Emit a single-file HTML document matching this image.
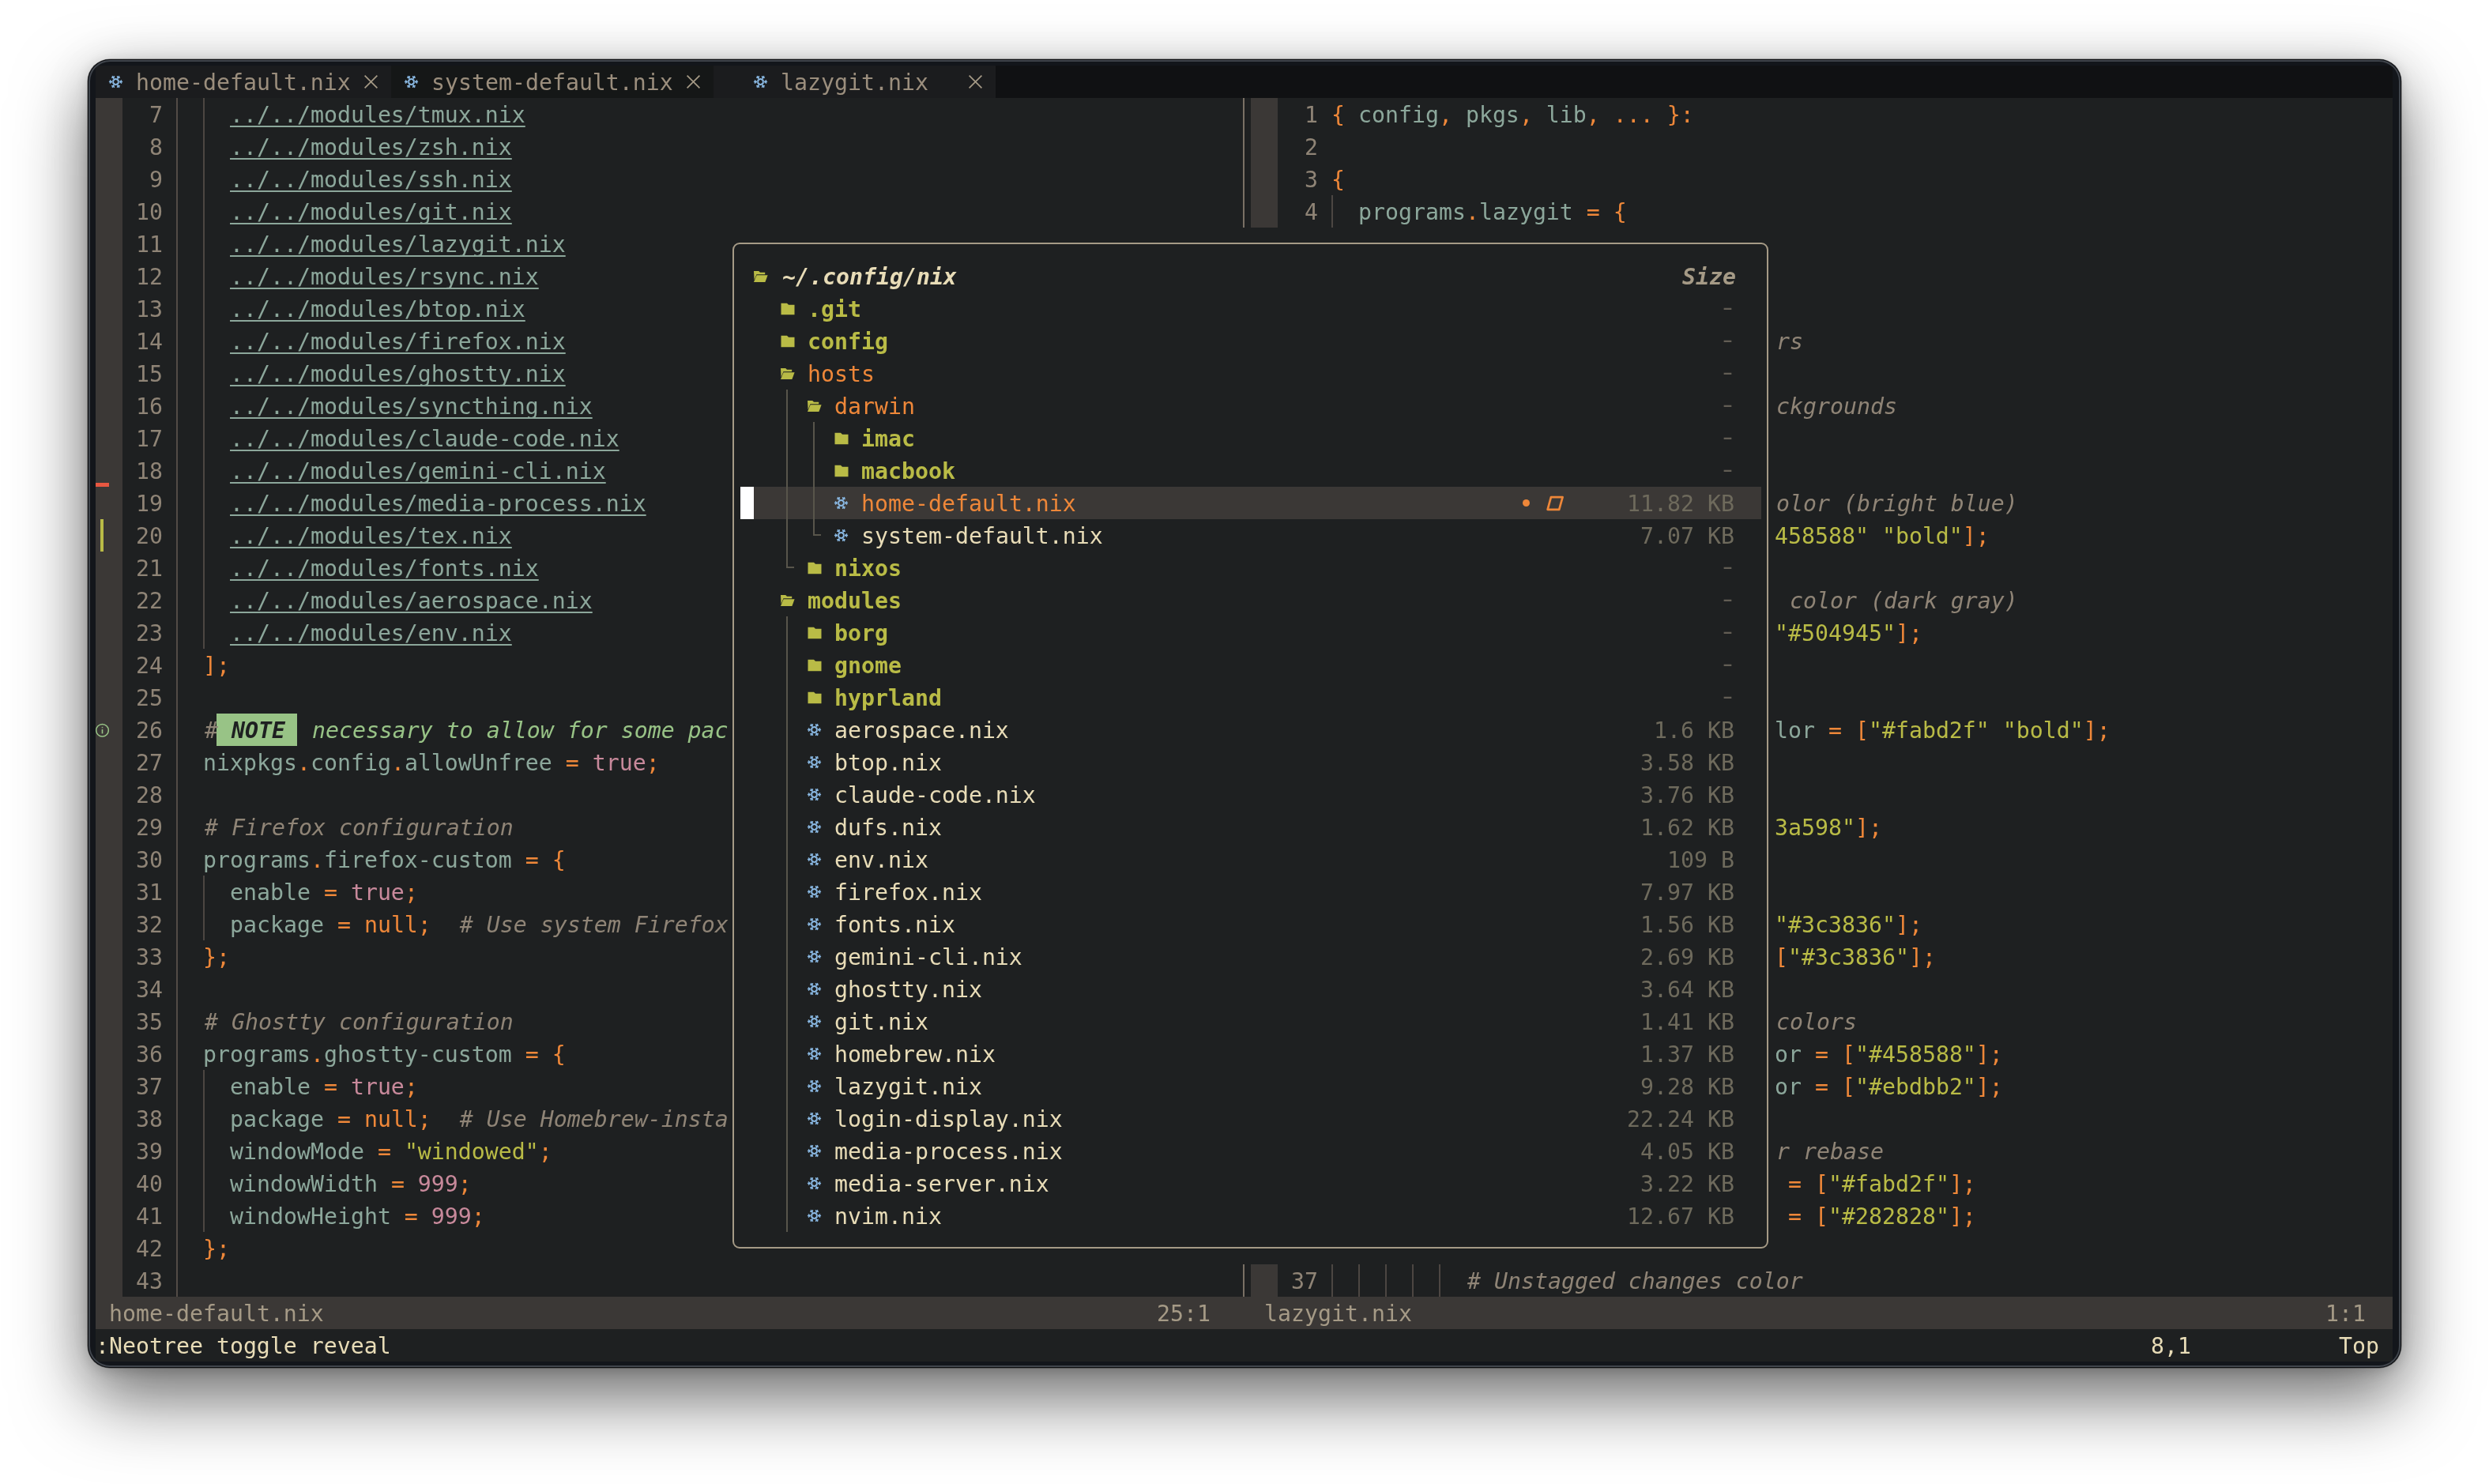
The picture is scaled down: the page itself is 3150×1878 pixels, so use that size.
<!DOCTYPE html>
<html lang="en"><head><meta charset="utf-8"><title>nvim — home-default.nix</title>
<style>
html,body{margin:0;padding:0}
body{width:3150px;height:1878px;background:#fff;position:relative;overflow:hidden}
#win{position:absolute;left:111px;top:75px;width:2928px;height:1656px;border-radius:28px;background:#13161b;
 box-shadow:0 0 0 .5px rgba(0,0,0,.5),0 40px 92px rgba(0,0,0,.54),0 8px 62px rgba(0,0,0,.10),0 3px 16px rgba(0,0,0,.15);overflow:hidden}
#edge{position:absolute;left:0;top:0;right:0;bottom:0;border-radius:28px;box-shadow:inset 0 0 0 1px #0b0c0f,inset 0 0 0 3px #40454c;pointer-events:none}
#grid{position:absolute;left:10px;top:8px;width:2907px;height:1640px;background:#1e2021;overflow:hidden;
 font-family:"DejaVu Sans Mono","Liberation Mono",monospace;font-size:28.237px;line-height:41px;color:#e8dcb7}
#txt{position:absolute;left:0;top:0;width:2907px;height:1640px;will-change:transform}
.b{position:absolute;display:block}
.t{position:absolute;white-space:pre;height:41px;padding-top:1px;box-sizing:border-box;font-kerning:none;font-variant-ligatures:none}
.i{font-style:italic;position:relative;left:2px}
.num{color:#8f8476} .com{color:#8f8476} .id{color:#8ca79b} .op{color:#ee8739}
.str{color:#b9bb46} .bool{color:#c8899b} .fg{color:#e8dcb7} .st{color:#a59a86}
.grn{color:#98c386} .tab{color:#9b8e7d}
.path{color:#8ca79b;text-decoration:underline;text-decoration-thickness:2px;text-underline-offset:4px;text-decoration-skip-ink:none}
.note{color:#1e2021;font-weight:bold}
.dir{color:#b9bb46;font-weight:bold} .mod{color:#ee8739} .file{color:#e8dcb7}
.root{color:#e8dcb7;font-weight:bold;font-style:italic;position:relative;left:2px} .sizeh{color:#a59a86;font-weight:bold;font-style:italic;position:relative;left:2px}
.size{color:#6e6a5c} .dash{color:#625d54;position:relative;top:-2px;display:inline-block;transform:scaleX(1.35)}
</style></head>
<body><div id="win"><div id="grid">
<div class="b" style="left:0px;top:0px;width:2907px;height:41px;background:#101113;"></div>
<div class="b" style="left:0px;top:0px;width:374px;height:41px;background:#1b1c1e;"></div>
<div class="b" style="left:374px;top:0px;width:408px;height:41px;background:#151717;"></div>
<div class="b" style="left:782px;top:0px;width:357px;height:41px;background:#1b1c1e;"></div>
<div class="b" style="left:0px;top:41px;width:34px;height:1517px;background:#3b3836;"></div>
<div class="b" style="left:153px;top:820px;width:102px;height:41px;background:#98c386;"></div>
<div class="b" style="left:102px;top:41px;width:2px;height:1517px;background:#524b46;"></div>
<div class="b" style="left:136px;top:41px;width:2px;height:697px;background:#4c4642;"></div>
<div class="b" style="left:136px;top:1025px;width:2px;height:82px;background:#4c4642;"></div>
<div class="b" style="left:136px;top:1271px;width:2px;height:205px;background:#4c4642;"></div>
<div class="b" style="left:0px;top:528px;width:17px;height:5px;background:#e85741;"></div>
<div class="b" style="left:6px;top:574px;width:4px;height:41px;background:#b9bb46;"></div>
<div class="b" style="left:1452px;top:41px;width:2px;height:164px;background:#797065;"></div>
<div class="b" style="left:1452px;top:1517px;width:2px;height:41px;background:#797065;"></div>
<div class="b" style="left:1462px;top:41px;width:34px;height:164px;background:#3b3836;"></div>
<div class="b" style="left:1462px;top:1517px;width:34px;height:41px;background:#3b3836;"></div>
<div class="b" style="left:1564px;top:164px;width:2px;height:41px;background:#4c4642;"></div>
<div class="b" style="left:1564px;top:1517px;width:2px;height:41px;background:#4c4642;"></div>
<div class="b" style="left:1598px;top:1517px;width:2px;height:41px;background:#4c4642;"></div>
<div class="b" style="left:1632px;top:1517px;width:2px;height:41px;background:#4c4642;"></div>
<div class="b" style="left:1666px;top:1517px;width:2px;height:41px;background:#4c4642;"></div>
<div class="b" style="left:1700px;top:1517px;width:2px;height:41px;background:#4c4642;"></div>
<div class="b" style="box-sizing:border-box;left:806px;top:224px;width:1311px;height:1273px;border:2px solid #a59a86;border-radius:9px;"></div>
<div class="b" style="left:816px;top:533px;width:1292px;height:41px;background:#3b3836;"></div>
<div class="b" style="left:816px;top:533px;width:17px;height:41px;background:#ffffff;"></div>
<div class="b" style="left:1806px;top:549px;width:9px;height:9px;background:#ee8739;border-radius:50%"></div>
<div class="b" style="left:874px;top:410px;width:2px;height:226px;background:#58554b;"></div>
<div class="b" style="left:874px;top:634px;width:10px;height:2px;background:#58554b;"></div>
<div class="b" style="left:908px;top:451px;width:2px;height:144px;background:#58554b;"></div>
<div class="b" style="left:908px;top:593px;width:10px;height:2px;background:#58554b;"></div>
<div class="b" style="left:874px;top:697px;width:2px;height:779px;background:#58554b;"></div>
<div class="b" style="left:0px;top:1558px;width:2907px;height:41px;background:#3b3836;"></div>
<div id="txt">
<svg class="b" style="left:16px;top:0px" width="19" height="41" viewBox="-1 0 19 41"><g stroke="#8cbbe6" fill="none"><polygon points="11.70,22.35 8.50,24.20 5.30,22.35 5.30,18.65 8.50,16.80 11.70,18.65" stroke-width="1.9"/><line x1="12.80" y1="20.50" x2="17.10" y2="20.50" stroke-width="1.6"/><line x1="14.10" y1="20.50" x2="15.84" y2="18.43" stroke-width="1.35"/><line x1="14.10" y1="20.50" x2="15.84" y2="22.57" stroke-width="1.35"/><line x1="10.65" y1="24.22" x2="12.80" y2="27.95" stroke-width="1.6"/><line x1="11.30" y1="25.35" x2="13.96" y2="25.82" stroke-width="1.35"/><line x1="11.30" y1="25.35" x2="10.38" y2="27.89" stroke-width="1.35"/><line x1="6.35" y1="24.22" x2="4.20" y2="27.95" stroke-width="1.6"/><line x1="5.70" y1="25.35" x2="6.62" y2="27.89" stroke-width="1.35"/><line x1="5.70" y1="25.35" x2="3.04" y2="25.82" stroke-width="1.35"/><line x1="4.20" y1="20.50" x2="-0.10" y2="20.50" stroke-width="1.6"/><line x1="2.90" y1="20.50" x2="1.16" y2="22.57" stroke-width="1.35"/><line x1="2.90" y1="20.50" x2="1.16" y2="18.43" stroke-width="1.35"/><line x1="6.35" y1="16.78" x2="4.20" y2="13.05" stroke-width="1.6"/><line x1="5.70" y1="15.65" x2="3.04" y2="15.18" stroke-width="1.35"/><line x1="5.70" y1="15.65" x2="6.62" y2="13.11" stroke-width="1.35"/><line x1="10.65" y1="16.78" x2="12.80" y2="13.05" stroke-width="1.6"/><line x1="11.30" y1="15.65" x2="10.38" y2="13.11" stroke-width="1.35"/><line x1="11.30" y1="15.65" x2="13.96" y2="15.18" stroke-width="1.35"/></g></svg>
<div class="t " style="left:51px;top:0px"><span class="tab">home-default.nix</span></div>
<svg class="b" style="left:340px;top:0px" width="17" height="41" viewBox="0 0 17 41"><path d="M0.6 12.6 L16.4 28.4 M16.4 12.6 L0.6 28.4" stroke="#a59a86" stroke-width="1.7" fill="none"/></svg>
<svg class="b" style="left:390px;top:0px" width="19" height="41" viewBox="-1 0 19 41"><g stroke="#8cbbe6" fill="none"><polygon points="11.70,22.35 8.50,24.20 5.30,22.35 5.30,18.65 8.50,16.80 11.70,18.65" stroke-width="1.9"/><line x1="12.80" y1="20.50" x2="17.10" y2="20.50" stroke-width="1.6"/><line x1="14.10" y1="20.50" x2="15.84" y2="18.43" stroke-width="1.35"/><line x1="14.10" y1="20.50" x2="15.84" y2="22.57" stroke-width="1.35"/><line x1="10.65" y1="24.22" x2="12.80" y2="27.95" stroke-width="1.6"/><line x1="11.30" y1="25.35" x2="13.96" y2="25.82" stroke-width="1.35"/><line x1="11.30" y1="25.35" x2="10.38" y2="27.89" stroke-width="1.35"/><line x1="6.35" y1="24.22" x2="4.20" y2="27.95" stroke-width="1.6"/><line x1="5.70" y1="25.35" x2="6.62" y2="27.89" stroke-width="1.35"/><line x1="5.70" y1="25.35" x2="3.04" y2="25.82" stroke-width="1.35"/><line x1="4.20" y1="20.50" x2="-0.10" y2="20.50" stroke-width="1.6"/><line x1="2.90" y1="20.50" x2="1.16" y2="22.57" stroke-width="1.35"/><line x1="2.90" y1="20.50" x2="1.16" y2="18.43" stroke-width="1.35"/><line x1="6.35" y1="16.78" x2="4.20" y2="13.05" stroke-width="1.6"/><line x1="5.70" y1="15.65" x2="3.04" y2="15.18" stroke-width="1.35"/><line x1="5.70" y1="15.65" x2="6.62" y2="13.11" stroke-width="1.35"/><line x1="10.65" y1="16.78" x2="12.80" y2="13.05" stroke-width="1.6"/><line x1="11.30" y1="15.65" x2="10.38" y2="13.11" stroke-width="1.35"/><line x1="11.30" y1="15.65" x2="13.96" y2="15.18" stroke-width="1.35"/></g></svg>
<div class="t " style="left:425px;top:0px"><span class="tab">system-default.nix</span></div>
<svg class="b" style="left:748px;top:0px" width="17" height="41" viewBox="0 0 17 41"><path d="M0.6 12.6 L16.4 28.4 M16.4 12.6 L0.6 28.4" stroke="#a59a86" stroke-width="1.7" fill="none"/></svg>
<svg class="b" style="left:832px;top:0px" width="19" height="41" viewBox="-1 0 19 41"><g stroke="#8cbbe6" fill="none"><polygon points="11.70,22.35 8.50,24.20 5.30,22.35 5.30,18.65 8.50,16.80 11.70,18.65" stroke-width="1.9"/><line x1="12.80" y1="20.50" x2="17.10" y2="20.50" stroke-width="1.6"/><line x1="14.10" y1="20.50" x2="15.84" y2="18.43" stroke-width="1.35"/><line x1="14.10" y1="20.50" x2="15.84" y2="22.57" stroke-width="1.35"/><line x1="10.65" y1="24.22" x2="12.80" y2="27.95" stroke-width="1.6"/><line x1="11.30" y1="25.35" x2="13.96" y2="25.82" stroke-width="1.35"/><line x1="11.30" y1="25.35" x2="10.38" y2="27.89" stroke-width="1.35"/><line x1="6.35" y1="24.22" x2="4.20" y2="27.95" stroke-width="1.6"/><line x1="5.70" y1="25.35" x2="6.62" y2="27.89" stroke-width="1.35"/><line x1="5.70" y1="25.35" x2="3.04" y2="25.82" stroke-width="1.35"/><line x1="4.20" y1="20.50" x2="-0.10" y2="20.50" stroke-width="1.6"/><line x1="2.90" y1="20.50" x2="1.16" y2="22.57" stroke-width="1.35"/><line x1="2.90" y1="20.50" x2="1.16" y2="18.43" stroke-width="1.35"/><line x1="6.35" y1="16.78" x2="4.20" y2="13.05" stroke-width="1.6"/><line x1="5.70" y1="15.65" x2="3.04" y2="15.18" stroke-width="1.35"/><line x1="5.70" y1="15.65" x2="6.62" y2="13.11" stroke-width="1.35"/><line x1="10.65" y1="16.78" x2="12.80" y2="13.05" stroke-width="1.6"/><line x1="11.30" y1="15.65" x2="10.38" y2="13.11" stroke-width="1.35"/><line x1="11.30" y1="15.65" x2="13.96" y2="15.18" stroke-width="1.35"/></g></svg>
<div class="t " style="left:867px;top:0px"><span class="tab">lazygit.nix</span></div>
<svg class="b" style="left:1105px;top:0px" width="17" height="41" viewBox="0 0 17 41"><path d="M0.6 12.6 L16.4 28.4 M16.4 12.6 L0.6 28.4" stroke="#a59a86" stroke-width="1.7" fill="none"/></svg>
<div class="t " style="left:34px;top:41px"><span class="num">  7</span></div>
<div class="t " style="left:170px;top:41px"><span class="path">../../modules/tmux.nix</span></div>
<div class="t " style="left:34px;top:82px"><span class="num">  8</span></div>
<div class="t " style="left:170px;top:82px"><span class="path">../../modules/zsh.nix</span></div>
<div class="t " style="left:34px;top:123px"><span class="num">  9</span></div>
<div class="t " style="left:170px;top:123px"><span class="path">../../modules/ssh.nix</span></div>
<div class="t " style="left:34px;top:164px"><span class="num"> 10</span></div>
<div class="t " style="left:170px;top:164px"><span class="path">../../modules/git.nix</span></div>
<div class="t " style="left:34px;top:205px"><span class="num"> 11</span></div>
<div class="t " style="left:170px;top:205px"><span class="path">../../modules/lazygit.nix</span></div>
<div class="t " style="left:34px;top:246px"><span class="num"> 12</span></div>
<div class="t " style="left:170px;top:246px"><span class="path">../../modules/rsync.nix</span></div>
<div class="t " style="left:34px;top:287px"><span class="num"> 13</span></div>
<div class="t " style="left:170px;top:287px"><span class="path">../../modules/btop.nix</span></div>
<div class="t " style="left:34px;top:328px"><span class="num"> 14</span></div>
<div class="t " style="left:170px;top:328px"><span class="path">../../modules/firefox.nix</span></div>
<div class="t " style="left:34px;top:369px"><span class="num"> 15</span></div>
<div class="t " style="left:170px;top:369px"><span class="path">../../modules/ghostty.nix</span></div>
<div class="t " style="left:34px;top:410px"><span class="num"> 16</span></div>
<div class="t " style="left:170px;top:410px"><span class="path">../../modules/syncthing.nix</span></div>
<div class="t " style="left:34px;top:451px"><span class="num"> 17</span></div>
<div class="t " style="left:170px;top:451px"><span class="path">../../modules/claude-code.nix</span></div>
<div class="t " style="left:34px;top:492px"><span class="num"> 18</span></div>
<div class="t " style="left:170px;top:492px"><span class="path">../../modules/gemini-cli.nix</span></div>
<div class="t " style="left:34px;top:533px"><span class="num"> 19</span></div>
<div class="t " style="left:170px;top:533px"><span class="path">../../modules/media-process.nix</span></div>
<div class="t " style="left:34px;top:574px"><span class="num"> 20</span></div>
<div class="t " style="left:170px;top:574px"><span class="path">../../modules/tex.nix</span></div>
<div class="t " style="left:34px;top:615px"><span class="num"> 21</span></div>
<div class="t " style="left:170px;top:615px"><span class="path">../../modules/fonts.nix</span></div>
<div class="t " style="left:34px;top:656px"><span class="num"> 22</span></div>
<div class="t " style="left:170px;top:656px"><span class="path">../../modules/aerospace.nix</span></div>
<div class="t " style="left:34px;top:697px"><span class="num"> 23</span></div>
<div class="t " style="left:170px;top:697px"><span class="path">../../modules/env.nix</span></div>
<div class="t " style="left:34px;top:738px"><span class="num"> 24</span></div>
<div class="t " style="left:136px;top:738px"><span class="op">];</span></div>
<div class="t " style="left:34px;top:779px"><span class="num"> 25</span></div>
<div class="t " style="left:34px;top:820px"><span class="num"> 26</span></div>
<div class="t " style="left:136px;top:820px"><span class="com i">#</span><span class="note i"> NOTE </span><span class="grn i"> necessary to allow for some pac</span></div>
<div class="t " style="left:34px;top:861px"><span class="num"> 27</span></div>
<div class="t " style="left:136px;top:861px"><span class="id">nixpkgs</span><span class="op">.</span><span class="id">config</span><span class="op">.</span><span class="id">allowUnfree</span><span class="op"> = </span><span class="bool">true</span><span class="op">;</span></div>
<div class="t " style="left:34px;top:902px"><span class="num"> 28</span></div>
<div class="t " style="left:34px;top:943px"><span class="num"> 29</span></div>
<div class="t " style="left:136px;top:943px"><span class="com i"># Firefox configuration</span></div>
<div class="t " style="left:34px;top:984px"><span class="num"> 30</span></div>
<div class="t " style="left:136px;top:984px"><span class="id">programs</span><span class="op">.</span><span class="id">firefox-custom</span><span class="op"> = {</span></div>
<div class="t " style="left:34px;top:1025px"><span class="num"> 31</span></div>
<div class="t " style="left:170px;top:1025px"><span class="id">enable</span><span class="op"> = </span><span class="bool">true</span><span class="op">;</span></div>
<div class="t " style="left:34px;top:1066px"><span class="num"> 32</span></div>
<div class="t " style="left:170px;top:1066px"><span class="id">package</span><span class="op"> = null;</span><span class="com i">  # Use system Firefox</span></div>
<div class="t " style="left:34px;top:1107px"><span class="num"> 33</span></div>
<div class="t " style="left:136px;top:1107px"><span class="op">};</span></div>
<div class="t " style="left:34px;top:1148px"><span class="num"> 34</span></div>
<div class="t " style="left:34px;top:1189px"><span class="num"> 35</span></div>
<div class="t " style="left:136px;top:1189px"><span class="com i"># Ghostty configuration</span></div>
<div class="t " style="left:34px;top:1230px"><span class="num"> 36</span></div>
<div class="t " style="left:136px;top:1230px"><span class="id">programs</span><span class="op">.</span><span class="id">ghostty-custom</span><span class="op"> = {</span></div>
<div class="t " style="left:34px;top:1271px"><span class="num"> 37</span></div>
<div class="t " style="left:170px;top:1271px"><span class="id">enable</span><span class="op"> = </span><span class="bool">true</span><span class="op">;</span></div>
<div class="t " style="left:34px;top:1312px"><span class="num"> 38</span></div>
<div class="t " style="left:170px;top:1312px"><span class="id">package</span><span class="op"> = null;</span><span class="com i">  # Use Homebrew-insta</span></div>
<div class="t " style="left:34px;top:1353px"><span class="num"> 39</span></div>
<div class="t " style="left:170px;top:1353px"><span class="id">windowMode</span><span class="op"> = </span><span class="str">"windowed"</span><span class="op">;</span></div>
<div class="t " style="left:34px;top:1394px"><span class="num"> 40</span></div>
<div class="t " style="left:170px;top:1394px"><span class="id">windowWidth</span><span class="op"> = </span><span class="bool">999</span><span class="op">;</span></div>
<div class="t " style="left:34px;top:1435px"><span class="num"> 41</span></div>
<div class="t " style="left:170px;top:1435px"><span class="id">windowHeight</span><span class="op"> = </span><span class="bool">999</span><span class="op">;</span></div>
<div class="t " style="left:34px;top:1476px"><span class="num"> 42</span></div>
<div class="t " style="left:136px;top:1476px"><span class="op">};</span></div>
<div class="t " style="left:34px;top:1517px"><span class="num"> 43</span></div>
<svg class="b" style="left:0px;top:820px" width="17" height="41" viewBox="0 0 17 41"><circle cx="8.5" cy="21.2" r="7.8" fill="none" stroke="#98c386" stroke-width="1.5"/><rect x="7.7" y="20" width="1.6" height="5.4" fill="#98c386"/><rect x="7.7" y="16.8" width="1.6" height="1.6" fill="#98c386" opacity=".8"/></svg>
<div class="t " style="left:1496px;top:41px"><span class="num">  1</span></div>
<div class="t " style="left:1496px;top:82px"><span class="num">  2</span></div>
<div class="t " style="left:1496px;top:123px"><span class="num">  3</span></div>
<div class="t " style="left:1496px;top:164px"><span class="num">  4</span></div>
<div class="t " style="left:1564px;top:41px"><span class="op">{ </span><span class="id">config</span><span class="op">, </span><span class="id">pkgs</span><span class="op">, </span><span class="id">lib</span><span class="op">, ... }:</span></div>
<div class="t " style="left:1564px;top:123px"><span class="op">{</span></div>
<div class="t " style="left:1598px;top:164px"><span class="id">programs</span><span class="op">.</span><span class="id">lazygit</span><span class="op"> = {</span></div>
<div class="t " style="left:1496px;top:1517px"><span class="num"> 37</span></div>
<div class="t " style="left:1734px;top:1517px"><span class="com i"># Unstagged changes color</span></div>
<div class="t " style="left:2125px;top:328px"><span class="com i">rs</span></div>
<div class="t " style="left:2125px;top:410px"><span class="com i">ckgrounds</span></div>
<div class="t " style="left:2125px;top:533px"><span class="com i">olor (bright blue)</span></div>
<div class="t " style="left:2125px;top:574px"><span class="str">458588" "bold"</span><span class="op">];</span></div>
<div class="t " style="left:2125px;top:656px"><span class="com i"> color (dark gray)</span></div>
<div class="t " style="left:2125px;top:697px"><span class="str">"#504945"</span><span class="op">];</span></div>
<div class="t " style="left:2125px;top:820px"><span class="id">lor</span><span class="op"> = [</span><span class="str">"#fabd2f" "bold"</span><span class="op">];</span></div>
<div class="t " style="left:2125px;top:943px"><span class="str">3a598"</span><span class="op">];</span></div>
<div class="t " style="left:2125px;top:1066px"><span class="str">"#3c3836"</span><span class="op">];</span></div>
<div class="t " style="left:2125px;top:1107px"><span class="op">[</span><span class="str">"#3c3836"</span><span class="op">];</span></div>
<div class="t " style="left:2125px;top:1189px"><span class="com i">colors</span></div>
<div class="t " style="left:2125px;top:1230px"><span class="id">or</span><span class="op"> = [</span><span class="str">"#458588"</span><span class="op">];</span></div>
<div class="t " style="left:2125px;top:1271px"><span class="id">or</span><span class="op"> = [</span><span class="str">"#ebdbb2"</span><span class="op">];</span></div>
<div class="t " style="left:2125px;top:1353px"><span class="com i">r rebase</span></div>
<div class="t " style="left:2125px;top:1394px"><span class="op"> = [</span><span class="str">"#fabd2f"</span><span class="op">];</span></div>
<div class="t " style="left:2125px;top:1435px"><span class="op"> = [</span><span class="str">"#282828"</span><span class="op">];</span></div>
<svg class="b" style="left:833px;top:246px" width="18" height="41" viewBox="0 0 18 41"><path d="M0 14 H6.2 L8 15.8 H14.2 V18.2 H3.4 L0.6 25.5 Z" fill="#b9bb46"/><path d="M3.6 19.2 H17.6 L14.4 28 H0 Z" fill="#b9bb46"/></svg>
<div class="t " style="left:867px;top:246px"><span class="root">~/.config/nix</span></div>
<div class="t " style="left:2006px;top:246px"><span class="sizeh">Size</span></div>
<svg class="b" style="left:867px;top:287px" width="18" height="41" viewBox="0 0 18 41"><path d="M0.5 13.7 H8 L10 15.8 H17.5 V28.2 H0.5 Z" fill="#b9bb46"/></svg>
<div class="t " style="left:901px;top:287px"><span class="dir">.git</span></div>
<div class="t " style="left:2057px;top:287px"><span class="dash">-</span></div>
<svg class="b" style="left:867px;top:328px" width="18" height="41" viewBox="0 0 18 41"><path d="M0.5 13.7 H8 L10 15.8 H17.5 V28.2 H0.5 Z" fill="#b9bb46"/></svg>
<div class="t " style="left:901px;top:328px"><span class="dir">config</span></div>
<div class="t " style="left:2057px;top:328px"><span class="dash">-</span></div>
<svg class="b" style="left:867px;top:369px" width="18" height="41" viewBox="0 0 18 41"><path d="M0 14 H6.2 L8 15.8 H14.2 V18.2 H3.4 L0.6 25.5 Z" fill="#b9bb46"/><path d="M3.6 19.2 H17.6 L14.4 28 H0 Z" fill="#b9bb46"/></svg>
<div class="t " style="left:901px;top:369px"><span class="mod">hosts</span></div>
<div class="t " style="left:2057px;top:369px"><span class="dash">-</span></div>
<svg class="b" style="left:901px;top:410px" width="18" height="41" viewBox="0 0 18 41"><path d="M0 14 H6.2 L8 15.8 H14.2 V18.2 H3.4 L0.6 25.5 Z" fill="#b9bb46"/><path d="M3.6 19.2 H17.6 L14.4 28 H0 Z" fill="#b9bb46"/></svg>
<div class="t " style="left:935px;top:410px"><span class="mod">darwin</span></div>
<div class="t " style="left:2057px;top:410px"><span class="dash">-</span></div>
<svg class="b" style="left:935px;top:451px" width="18" height="41" viewBox="0 0 18 41"><path d="M0.5 13.7 H8 L10 15.8 H17.5 V28.2 H0.5 Z" fill="#b9bb46"/></svg>
<div class="t " style="left:969px;top:451px"><span class="dir">imac</span></div>
<div class="t " style="left:2057px;top:451px"><span class="dash">-</span></div>
<svg class="b" style="left:935px;top:492px" width="18" height="41" viewBox="0 0 18 41"><path d="M0.5 13.7 H8 L10 15.8 H17.5 V28.2 H0.5 Z" fill="#b9bb46"/></svg>
<div class="t " style="left:969px;top:492px"><span class="dir">macbook</span></div>
<div class="t " style="left:2057px;top:492px"><span class="dash">-</span></div>
<svg class="b" style="left:934px;top:533px" width="19" height="41" viewBox="-1 0 19 41"><g stroke="#8cbbe6" fill="none"><polygon points="11.70,22.35 8.50,24.20 5.30,22.35 5.30,18.65 8.50,16.80 11.70,18.65" stroke-width="1.9"/><line x1="12.80" y1="20.50" x2="17.10" y2="20.50" stroke-width="1.6"/><line x1="14.10" y1="20.50" x2="15.84" y2="18.43" stroke-width="1.35"/><line x1="14.10" y1="20.50" x2="15.84" y2="22.57" stroke-width="1.35"/><line x1="10.65" y1="24.22" x2="12.80" y2="27.95" stroke-width="1.6"/><line x1="11.30" y1="25.35" x2="13.96" y2="25.82" stroke-width="1.35"/><line x1="11.30" y1="25.35" x2="10.38" y2="27.89" stroke-width="1.35"/><line x1="6.35" y1="24.22" x2="4.20" y2="27.95" stroke-width="1.6"/><line x1="5.70" y1="25.35" x2="6.62" y2="27.89" stroke-width="1.35"/><line x1="5.70" y1="25.35" x2="3.04" y2="25.82" stroke-width="1.35"/><line x1="4.20" y1="20.50" x2="-0.10" y2="20.50" stroke-width="1.6"/><line x1="2.90" y1="20.50" x2="1.16" y2="22.57" stroke-width="1.35"/><line x1="2.90" y1="20.50" x2="1.16" y2="18.43" stroke-width="1.35"/><line x1="6.35" y1="16.78" x2="4.20" y2="13.05" stroke-width="1.6"/><line x1="5.70" y1="15.65" x2="3.04" y2="15.18" stroke-width="1.35"/><line x1="5.70" y1="15.65" x2="6.62" y2="13.11" stroke-width="1.35"/><line x1="10.65" y1="16.78" x2="12.80" y2="13.05" stroke-width="1.6"/><line x1="11.30" y1="15.65" x2="10.38" y2="13.11" stroke-width="1.35"/><line x1="11.30" y1="15.65" x2="13.96" y2="15.18" stroke-width="1.35"/></g></svg>
<div class="t " style="left:969px;top:533px"><span class="mod">home-default.nix</span></div>
<div class="t " style="left:1938px;top:533px"><span class="size">11.82 KB</span></div>
<svg class="b" style="left:934px;top:574px" width="19" height="41" viewBox="-1 0 19 41"><g stroke="#8cbbe6" fill="none"><polygon points="11.70,22.35 8.50,24.20 5.30,22.35 5.30,18.65 8.50,16.80 11.70,18.65" stroke-width="1.9"/><line x1="12.80" y1="20.50" x2="17.10" y2="20.50" stroke-width="1.6"/><line x1="14.10" y1="20.50" x2="15.84" y2="18.43" stroke-width="1.35"/><line x1="14.10" y1="20.50" x2="15.84" y2="22.57" stroke-width="1.35"/><line x1="10.65" y1="24.22" x2="12.80" y2="27.95" stroke-width="1.6"/><line x1="11.30" y1="25.35" x2="13.96" y2="25.82" stroke-width="1.35"/><line x1="11.30" y1="25.35" x2="10.38" y2="27.89" stroke-width="1.35"/><line x1="6.35" y1="24.22" x2="4.20" y2="27.95" stroke-width="1.6"/><line x1="5.70" y1="25.35" x2="6.62" y2="27.89" stroke-width="1.35"/><line x1="5.70" y1="25.35" x2="3.04" y2="25.82" stroke-width="1.35"/><line x1="4.20" y1="20.50" x2="-0.10" y2="20.50" stroke-width="1.6"/><line x1="2.90" y1="20.50" x2="1.16" y2="22.57" stroke-width="1.35"/><line x1="2.90" y1="20.50" x2="1.16" y2="18.43" stroke-width="1.35"/><line x1="6.35" y1="16.78" x2="4.20" y2="13.05" stroke-width="1.6"/><line x1="5.70" y1="15.65" x2="3.04" y2="15.18" stroke-width="1.35"/><line x1="5.70" y1="15.65" x2="6.62" y2="13.11" stroke-width="1.35"/><line x1="10.65" y1="16.78" x2="12.80" y2="13.05" stroke-width="1.6"/><line x1="11.30" y1="15.65" x2="10.38" y2="13.11" stroke-width="1.35"/><line x1="11.30" y1="15.65" x2="13.96" y2="15.18" stroke-width="1.35"/></g></svg>
<div class="t " style="left:969px;top:574px"><span class="file">system-default.nix</span></div>
<div class="t " style="left:1955px;top:574px"><span class="size">7.07 KB</span></div>
<svg class="b" style="left:901px;top:615px" width="18" height="41" viewBox="0 0 18 41"><path d="M0.5 13.7 H8 L10 15.8 H17.5 V28.2 H0.5 Z" fill="#b9bb46"/></svg>
<div class="t " style="left:935px;top:615px"><span class="dir">nixos</span></div>
<div class="t " style="left:2057px;top:615px"><span class="dash">-</span></div>
<svg class="b" style="left:867px;top:656px" width="18" height="41" viewBox="0 0 18 41"><path d="M0 14 H6.2 L8 15.8 H14.2 V18.2 H3.4 L0.6 25.5 Z" fill="#b9bb46"/><path d="M3.6 19.2 H17.6 L14.4 28 H0 Z" fill="#b9bb46"/></svg>
<div class="t " style="left:901px;top:656px"><span class="dir">modules</span></div>
<div class="t " style="left:2057px;top:656px"><span class="dash">-</span></div>
<svg class="b" style="left:901px;top:697px" width="18" height="41" viewBox="0 0 18 41"><path d="M0.5 13.7 H8 L10 15.8 H17.5 V28.2 H0.5 Z" fill="#b9bb46"/></svg>
<div class="t " style="left:935px;top:697px"><span class="dir">borg</span></div>
<div class="t " style="left:2057px;top:697px"><span class="dash">-</span></div>
<svg class="b" style="left:901px;top:738px" width="18" height="41" viewBox="0 0 18 41"><path d="M0.5 13.7 H8 L10 15.8 H17.5 V28.2 H0.5 Z" fill="#b9bb46"/></svg>
<div class="t " style="left:935px;top:738px"><span class="dir">gnome</span></div>
<div class="t " style="left:2057px;top:738px"><span class="dash">-</span></div>
<svg class="b" style="left:901px;top:779px" width="18" height="41" viewBox="0 0 18 41"><path d="M0.5 13.7 H8 L10 15.8 H17.5 V28.2 H0.5 Z" fill="#b9bb46"/></svg>
<div class="t " style="left:935px;top:779px"><span class="dir">hyprland</span></div>
<div class="t " style="left:2057px;top:779px"><span class="dash">-</span></div>
<svg class="b" style="left:900px;top:820px" width="19" height="41" viewBox="-1 0 19 41"><g stroke="#8cbbe6" fill="none"><polygon points="11.70,22.35 8.50,24.20 5.30,22.35 5.30,18.65 8.50,16.80 11.70,18.65" stroke-width="1.9"/><line x1="12.80" y1="20.50" x2="17.10" y2="20.50" stroke-width="1.6"/><line x1="14.10" y1="20.50" x2="15.84" y2="18.43" stroke-width="1.35"/><line x1="14.10" y1="20.50" x2="15.84" y2="22.57" stroke-width="1.35"/><line x1="10.65" y1="24.22" x2="12.80" y2="27.95" stroke-width="1.6"/><line x1="11.30" y1="25.35" x2="13.96" y2="25.82" stroke-width="1.35"/><line x1="11.30" y1="25.35" x2="10.38" y2="27.89" stroke-width="1.35"/><line x1="6.35" y1="24.22" x2="4.20" y2="27.95" stroke-width="1.6"/><line x1="5.70" y1="25.35" x2="6.62" y2="27.89" stroke-width="1.35"/><line x1="5.70" y1="25.35" x2="3.04" y2="25.82" stroke-width="1.35"/><line x1="4.20" y1="20.50" x2="-0.10" y2="20.50" stroke-width="1.6"/><line x1="2.90" y1="20.50" x2="1.16" y2="22.57" stroke-width="1.35"/><line x1="2.90" y1="20.50" x2="1.16" y2="18.43" stroke-width="1.35"/><line x1="6.35" y1="16.78" x2="4.20" y2="13.05" stroke-width="1.6"/><line x1="5.70" y1="15.65" x2="3.04" y2="15.18" stroke-width="1.35"/><line x1="5.70" y1="15.65" x2="6.62" y2="13.11" stroke-width="1.35"/><line x1="10.65" y1="16.78" x2="12.80" y2="13.05" stroke-width="1.6"/><line x1="11.30" y1="15.65" x2="10.38" y2="13.11" stroke-width="1.35"/><line x1="11.30" y1="15.65" x2="13.96" y2="15.18" stroke-width="1.35"/></g></svg>
<div class="t " style="left:935px;top:820px"><span class="file">aerospace.nix</span></div>
<div class="t " style="left:1972px;top:820px"><span class="size">1.6 KB</span></div>
<svg class="b" style="left:900px;top:861px" width="19" height="41" viewBox="-1 0 19 41"><g stroke="#8cbbe6" fill="none"><polygon points="11.70,22.35 8.50,24.20 5.30,22.35 5.30,18.65 8.50,16.80 11.70,18.65" stroke-width="1.9"/><line x1="12.80" y1="20.50" x2="17.10" y2="20.50" stroke-width="1.6"/><line x1="14.10" y1="20.50" x2="15.84" y2="18.43" stroke-width="1.35"/><line x1="14.10" y1="20.50" x2="15.84" y2="22.57" stroke-width="1.35"/><line x1="10.65" y1="24.22" x2="12.80" y2="27.95" stroke-width="1.6"/><line x1="11.30" y1="25.35" x2="13.96" y2="25.82" stroke-width="1.35"/><line x1="11.30" y1="25.35" x2="10.38" y2="27.89" stroke-width="1.35"/><line x1="6.35" y1="24.22" x2="4.20" y2="27.95" stroke-width="1.6"/><line x1="5.70" y1="25.35" x2="6.62" y2="27.89" stroke-width="1.35"/><line x1="5.70" y1="25.35" x2="3.04" y2="25.82" stroke-width="1.35"/><line x1="4.20" y1="20.50" x2="-0.10" y2="20.50" stroke-width="1.6"/><line x1="2.90" y1="20.50" x2="1.16" y2="22.57" stroke-width="1.35"/><line x1="2.90" y1="20.50" x2="1.16" y2="18.43" stroke-width="1.35"/><line x1="6.35" y1="16.78" x2="4.20" y2="13.05" stroke-width="1.6"/><line x1="5.70" y1="15.65" x2="3.04" y2="15.18" stroke-width="1.35"/><line x1="5.70" y1="15.65" x2="6.62" y2="13.11" stroke-width="1.35"/><line x1="10.65" y1="16.78" x2="12.80" y2="13.05" stroke-width="1.6"/><line x1="11.30" y1="15.65" x2="10.38" y2="13.11" stroke-width="1.35"/><line x1="11.30" y1="15.65" x2="13.96" y2="15.18" stroke-width="1.35"/></g></svg>
<div class="t " style="left:935px;top:861px"><span class="file">btop.nix</span></div>
<div class="t " style="left:1955px;top:861px"><span class="size">3.58 KB</span></div>
<svg class="b" style="left:900px;top:902px" width="19" height="41" viewBox="-1 0 19 41"><g stroke="#8cbbe6" fill="none"><polygon points="11.70,22.35 8.50,24.20 5.30,22.35 5.30,18.65 8.50,16.80 11.70,18.65" stroke-width="1.9"/><line x1="12.80" y1="20.50" x2="17.10" y2="20.50" stroke-width="1.6"/><line x1="14.10" y1="20.50" x2="15.84" y2="18.43" stroke-width="1.35"/><line x1="14.10" y1="20.50" x2="15.84" y2="22.57" stroke-width="1.35"/><line x1="10.65" y1="24.22" x2="12.80" y2="27.95" stroke-width="1.6"/><line x1="11.30" y1="25.35" x2="13.96" y2="25.82" stroke-width="1.35"/><line x1="11.30" y1="25.35" x2="10.38" y2="27.89" stroke-width="1.35"/><line x1="6.35" y1="24.22" x2="4.20" y2="27.95" stroke-width="1.6"/><line x1="5.70" y1="25.35" x2="6.62" y2="27.89" stroke-width="1.35"/><line x1="5.70" y1="25.35" x2="3.04" y2="25.82" stroke-width="1.35"/><line x1="4.20" y1="20.50" x2="-0.10" y2="20.50" stroke-width="1.6"/><line x1="2.90" y1="20.50" x2="1.16" y2="22.57" stroke-width="1.35"/><line x1="2.90" y1="20.50" x2="1.16" y2="18.43" stroke-width="1.35"/><line x1="6.35" y1="16.78" x2="4.20" y2="13.05" stroke-width="1.6"/><line x1="5.70" y1="15.65" x2="3.04" y2="15.18" stroke-width="1.35"/><line x1="5.70" y1="15.65" x2="6.62" y2="13.11" stroke-width="1.35"/><line x1="10.65" y1="16.78" x2="12.80" y2="13.05" stroke-width="1.6"/><line x1="11.30" y1="15.65" x2="10.38" y2="13.11" stroke-width="1.35"/><line x1="11.30" y1="15.65" x2="13.96" y2="15.18" stroke-width="1.35"/></g></svg>
<div class="t " style="left:935px;top:902px"><span class="file">claude-code.nix</span></div>
<div class="t " style="left:1955px;top:902px"><span class="size">3.76 KB</span></div>
<svg class="b" style="left:900px;top:943px" width="19" height="41" viewBox="-1 0 19 41"><g stroke="#8cbbe6" fill="none"><polygon points="11.70,22.35 8.50,24.20 5.30,22.35 5.30,18.65 8.50,16.80 11.70,18.65" stroke-width="1.9"/><line x1="12.80" y1="20.50" x2="17.10" y2="20.50" stroke-width="1.6"/><line x1="14.10" y1="20.50" x2="15.84" y2="18.43" stroke-width="1.35"/><line x1="14.10" y1="20.50" x2="15.84" y2="22.57" stroke-width="1.35"/><line x1="10.65" y1="24.22" x2="12.80" y2="27.95" stroke-width="1.6"/><line x1="11.30" y1="25.35" x2="13.96" y2="25.82" stroke-width="1.35"/><line x1="11.30" y1="25.35" x2="10.38" y2="27.89" stroke-width="1.35"/><line x1="6.35" y1="24.22" x2="4.20" y2="27.95" stroke-width="1.6"/><line x1="5.70" y1="25.35" x2="6.62" y2="27.89" stroke-width="1.35"/><line x1="5.70" y1="25.35" x2="3.04" y2="25.82" stroke-width="1.35"/><line x1="4.20" y1="20.50" x2="-0.10" y2="20.50" stroke-width="1.6"/><line x1="2.90" y1="20.50" x2="1.16" y2="22.57" stroke-width="1.35"/><line x1="2.90" y1="20.50" x2="1.16" y2="18.43" stroke-width="1.35"/><line x1="6.35" y1="16.78" x2="4.20" y2="13.05" stroke-width="1.6"/><line x1="5.70" y1="15.65" x2="3.04" y2="15.18" stroke-width="1.35"/><line x1="5.70" y1="15.65" x2="6.62" y2="13.11" stroke-width="1.35"/><line x1="10.65" y1="16.78" x2="12.80" y2="13.05" stroke-width="1.6"/><line x1="11.30" y1="15.65" x2="10.38" y2="13.11" stroke-width="1.35"/><line x1="11.30" y1="15.65" x2="13.96" y2="15.18" stroke-width="1.35"/></g></svg>
<div class="t " style="left:935px;top:943px"><span class="file">dufs.nix</span></div>
<div class="t " style="left:1955px;top:943px"><span class="size">1.62 KB</span></div>
<svg class="b" style="left:900px;top:984px" width="19" height="41" viewBox="-1 0 19 41"><g stroke="#8cbbe6" fill="none"><polygon points="11.70,22.35 8.50,24.20 5.30,22.35 5.30,18.65 8.50,16.80 11.70,18.65" stroke-width="1.9"/><line x1="12.80" y1="20.50" x2="17.10" y2="20.50" stroke-width="1.6"/><line x1="14.10" y1="20.50" x2="15.84" y2="18.43" stroke-width="1.35"/><line x1="14.10" y1="20.50" x2="15.84" y2="22.57" stroke-width="1.35"/><line x1="10.65" y1="24.22" x2="12.80" y2="27.95" stroke-width="1.6"/><line x1="11.30" y1="25.35" x2="13.96" y2="25.82" stroke-width="1.35"/><line x1="11.30" y1="25.35" x2="10.38" y2="27.89" stroke-width="1.35"/><line x1="6.35" y1="24.22" x2="4.20" y2="27.95" stroke-width="1.6"/><line x1="5.70" y1="25.35" x2="6.62" y2="27.89" stroke-width="1.35"/><line x1="5.70" y1="25.35" x2="3.04" y2="25.82" stroke-width="1.35"/><line x1="4.20" y1="20.50" x2="-0.10" y2="20.50" stroke-width="1.6"/><line x1="2.90" y1="20.50" x2="1.16" y2="22.57" stroke-width="1.35"/><line x1="2.90" y1="20.50" x2="1.16" y2="18.43" stroke-width="1.35"/><line x1="6.35" y1="16.78" x2="4.20" y2="13.05" stroke-width="1.6"/><line x1="5.70" y1="15.65" x2="3.04" y2="15.18" stroke-width="1.35"/><line x1="5.70" y1="15.65" x2="6.62" y2="13.11" stroke-width="1.35"/><line x1="10.65" y1="16.78" x2="12.80" y2="13.05" stroke-width="1.6"/><line x1="11.30" y1="15.65" x2="10.38" y2="13.11" stroke-width="1.35"/><line x1="11.30" y1="15.65" x2="13.96" y2="15.18" stroke-width="1.35"/></g></svg>
<div class="t " style="left:935px;top:984px"><span class="file">env.nix</span></div>
<div class="t " style="left:1989px;top:984px"><span class="size">109 B</span></div>
<svg class="b" style="left:900px;top:1025px" width="19" height="41" viewBox="-1 0 19 41"><g stroke="#8cbbe6" fill="none"><polygon points="11.70,22.35 8.50,24.20 5.30,22.35 5.30,18.65 8.50,16.80 11.70,18.65" stroke-width="1.9"/><line x1="12.80" y1="20.50" x2="17.10" y2="20.50" stroke-width="1.6"/><line x1="14.10" y1="20.50" x2="15.84" y2="18.43" stroke-width="1.35"/><line x1="14.10" y1="20.50" x2="15.84" y2="22.57" stroke-width="1.35"/><line x1="10.65" y1="24.22" x2="12.80" y2="27.95" stroke-width="1.6"/><line x1="11.30" y1="25.35" x2="13.96" y2="25.82" stroke-width="1.35"/><line x1="11.30" y1="25.35" x2="10.38" y2="27.89" stroke-width="1.35"/><line x1="6.35" y1="24.22" x2="4.20" y2="27.95" stroke-width="1.6"/><line x1="5.70" y1="25.35" x2="6.62" y2="27.89" stroke-width="1.35"/><line x1="5.70" y1="25.35" x2="3.04" y2="25.82" stroke-width="1.35"/><line x1="4.20" y1="20.50" x2="-0.10" y2="20.50" stroke-width="1.6"/><line x1="2.90" y1="20.50" x2="1.16" y2="22.57" stroke-width="1.35"/><line x1="2.90" y1="20.50" x2="1.16" y2="18.43" stroke-width="1.35"/><line x1="6.35" y1="16.78" x2="4.20" y2="13.05" stroke-width="1.6"/><line x1="5.70" y1="15.65" x2="3.04" y2="15.18" stroke-width="1.35"/><line x1="5.70" y1="15.65" x2="6.62" y2="13.11" stroke-width="1.35"/><line x1="10.65" y1="16.78" x2="12.80" y2="13.05" stroke-width="1.6"/><line x1="11.30" y1="15.65" x2="10.38" y2="13.11" stroke-width="1.35"/><line x1="11.30" y1="15.65" x2="13.96" y2="15.18" stroke-width="1.35"/></g></svg>
<div class="t " style="left:935px;top:1025px"><span class="file">firefox.nix</span></div>
<div class="t " style="left:1955px;top:1025px"><span class="size">7.97 KB</span></div>
<svg class="b" style="left:900px;top:1066px" width="19" height="41" viewBox="-1 0 19 41"><g stroke="#8cbbe6" fill="none"><polygon points="11.70,22.35 8.50,24.20 5.30,22.35 5.30,18.65 8.50,16.80 11.70,18.65" stroke-width="1.9"/><line x1="12.80" y1="20.50" x2="17.10" y2="20.50" stroke-width="1.6"/><line x1="14.10" y1="20.50" x2="15.84" y2="18.43" stroke-width="1.35"/><line x1="14.10" y1="20.50" x2="15.84" y2="22.57" stroke-width="1.35"/><line x1="10.65" y1="24.22" x2="12.80" y2="27.95" stroke-width="1.6"/><line x1="11.30" y1="25.35" x2="13.96" y2="25.82" stroke-width="1.35"/><line x1="11.30" y1="25.35" x2="10.38" y2="27.89" stroke-width="1.35"/><line x1="6.35" y1="24.22" x2="4.20" y2="27.95" stroke-width="1.6"/><line x1="5.70" y1="25.35" x2="6.62" y2="27.89" stroke-width="1.35"/><line x1="5.70" y1="25.35" x2="3.04" y2="25.82" stroke-width="1.35"/><line x1="4.20" y1="20.50" x2="-0.10" y2="20.50" stroke-width="1.6"/><line x1="2.90" y1="20.50" x2="1.16" y2="22.57" stroke-width="1.35"/><line x1="2.90" y1="20.50" x2="1.16" y2="18.43" stroke-width="1.35"/><line x1="6.35" y1="16.78" x2="4.20" y2="13.05" stroke-width="1.6"/><line x1="5.70" y1="15.65" x2="3.04" y2="15.18" stroke-width="1.35"/><line x1="5.70" y1="15.65" x2="6.62" y2="13.11" stroke-width="1.35"/><line x1="10.65" y1="16.78" x2="12.80" y2="13.05" stroke-width="1.6"/><line x1="11.30" y1="15.65" x2="10.38" y2="13.11" stroke-width="1.35"/><line x1="11.30" y1="15.65" x2="13.96" y2="15.18" stroke-width="1.35"/></g></svg>
<div class="t " style="left:935px;top:1066px"><span class="file">fonts.nix</span></div>
<div class="t " style="left:1955px;top:1066px"><span class="size">1.56 KB</span></div>
<svg class="b" style="left:900px;top:1107px" width="19" height="41" viewBox="-1 0 19 41"><g stroke="#8cbbe6" fill="none"><polygon points="11.70,22.35 8.50,24.20 5.30,22.35 5.30,18.65 8.50,16.80 11.70,18.65" stroke-width="1.9"/><line x1="12.80" y1="20.50" x2="17.10" y2="20.50" stroke-width="1.6"/><line x1="14.10" y1="20.50" x2="15.84" y2="18.43" stroke-width="1.35"/><line x1="14.10" y1="20.50" x2="15.84" y2="22.57" stroke-width="1.35"/><line x1="10.65" y1="24.22" x2="12.80" y2="27.95" stroke-width="1.6"/><line x1="11.30" y1="25.35" x2="13.96" y2="25.82" stroke-width="1.35"/><line x1="11.30" y1="25.35" x2="10.38" y2="27.89" stroke-width="1.35"/><line x1="6.35" y1="24.22" x2="4.20" y2="27.95" stroke-width="1.6"/><line x1="5.70" y1="25.35" x2="6.62" y2="27.89" stroke-width="1.35"/><line x1="5.70" y1="25.35" x2="3.04" y2="25.82" stroke-width="1.35"/><line x1="4.20" y1="20.50" x2="-0.10" y2="20.50" stroke-width="1.6"/><line x1="2.90" y1="20.50" x2="1.16" y2="22.57" stroke-width="1.35"/><line x1="2.90" y1="20.50" x2="1.16" y2="18.43" stroke-width="1.35"/><line x1="6.35" y1="16.78" x2="4.20" y2="13.05" stroke-width="1.6"/><line x1="5.70" y1="15.65" x2="3.04" y2="15.18" stroke-width="1.35"/><line x1="5.70" y1="15.65" x2="6.62" y2="13.11" stroke-width="1.35"/><line x1="10.65" y1="16.78" x2="12.80" y2="13.05" stroke-width="1.6"/><line x1="11.30" y1="15.65" x2="10.38" y2="13.11" stroke-width="1.35"/><line x1="11.30" y1="15.65" x2="13.96" y2="15.18" stroke-width="1.35"/></g></svg>
<div class="t " style="left:935px;top:1107px"><span class="file">gemini-cli.nix</span></div>
<div class="t " style="left:1955px;top:1107px"><span class="size">2.69 KB</span></div>
<svg class="b" style="left:900px;top:1148px" width="19" height="41" viewBox="-1 0 19 41"><g stroke="#8cbbe6" fill="none"><polygon points="11.70,22.35 8.50,24.20 5.30,22.35 5.30,18.65 8.50,16.80 11.70,18.65" stroke-width="1.9"/><line x1="12.80" y1="20.50" x2="17.10" y2="20.50" stroke-width="1.6"/><line x1="14.10" y1="20.50" x2="15.84" y2="18.43" stroke-width="1.35"/><line x1="14.10" y1="20.50" x2="15.84" y2="22.57" stroke-width="1.35"/><line x1="10.65" y1="24.22" x2="12.80" y2="27.95" stroke-width="1.6"/><line x1="11.30" y1="25.35" x2="13.96" y2="25.82" stroke-width="1.35"/><line x1="11.30" y1="25.35" x2="10.38" y2="27.89" stroke-width="1.35"/><line x1="6.35" y1="24.22" x2="4.20" y2="27.95" stroke-width="1.6"/><line x1="5.70" y1="25.35" x2="6.62" y2="27.89" stroke-width="1.35"/><line x1="5.70" y1="25.35" x2="3.04" y2="25.82" stroke-width="1.35"/><line x1="4.20" y1="20.50" x2="-0.10" y2="20.50" stroke-width="1.6"/><line x1="2.90" y1="20.50" x2="1.16" y2="22.57" stroke-width="1.35"/><line x1="2.90" y1="20.50" x2="1.16" y2="18.43" stroke-width="1.35"/><line x1="6.35" y1="16.78" x2="4.20" y2="13.05" stroke-width="1.6"/><line x1="5.70" y1="15.65" x2="3.04" y2="15.18" stroke-width="1.35"/><line x1="5.70" y1="15.65" x2="6.62" y2="13.11" stroke-width="1.35"/><line x1="10.65" y1="16.78" x2="12.80" y2="13.05" stroke-width="1.6"/><line x1="11.30" y1="15.65" x2="10.38" y2="13.11" stroke-width="1.35"/><line x1="11.30" y1="15.65" x2="13.96" y2="15.18" stroke-width="1.35"/></g></svg>
<div class="t " style="left:935px;top:1148px"><span class="file">ghostty.nix</span></div>
<div class="t " style="left:1955px;top:1148px"><span class="size">3.64 KB</span></div>
<svg class="b" style="left:900px;top:1189px" width="19" height="41" viewBox="-1 0 19 41"><g stroke="#8cbbe6" fill="none"><polygon points="11.70,22.35 8.50,24.20 5.30,22.35 5.30,18.65 8.50,16.80 11.70,18.65" stroke-width="1.9"/><line x1="12.80" y1="20.50" x2="17.10" y2="20.50" stroke-width="1.6"/><line x1="14.10" y1="20.50" x2="15.84" y2="18.43" stroke-width="1.35"/><line x1="14.10" y1="20.50" x2="15.84" y2="22.57" stroke-width="1.35"/><line x1="10.65" y1="24.22" x2="12.80" y2="27.95" stroke-width="1.6"/><line x1="11.30" y1="25.35" x2="13.96" y2="25.82" stroke-width="1.35"/><line x1="11.30" y1="25.35" x2="10.38" y2="27.89" stroke-width="1.35"/><line x1="6.35" y1="24.22" x2="4.20" y2="27.95" stroke-width="1.6"/><line x1="5.70" y1="25.35" x2="6.62" y2="27.89" stroke-width="1.35"/><line x1="5.70" y1="25.35" x2="3.04" y2="25.82" stroke-width="1.35"/><line x1="4.20" y1="20.50" x2="-0.10" y2="20.50" stroke-width="1.6"/><line x1="2.90" y1="20.50" x2="1.16" y2="22.57" stroke-width="1.35"/><line x1="2.90" y1="20.50" x2="1.16" y2="18.43" stroke-width="1.35"/><line x1="6.35" y1="16.78" x2="4.20" y2="13.05" stroke-width="1.6"/><line x1="5.70" y1="15.65" x2="3.04" y2="15.18" stroke-width="1.35"/><line x1="5.70" y1="15.65" x2="6.62" y2="13.11" stroke-width="1.35"/><line x1="10.65" y1="16.78" x2="12.80" y2="13.05" stroke-width="1.6"/><line x1="11.30" y1="15.65" x2="10.38" y2="13.11" stroke-width="1.35"/><line x1="11.30" y1="15.65" x2="13.96" y2="15.18" stroke-width="1.35"/></g></svg>
<div class="t " style="left:935px;top:1189px"><span class="file">git.nix</span></div>
<div class="t " style="left:1955px;top:1189px"><span class="size">1.41 KB</span></div>
<svg class="b" style="left:900px;top:1230px" width="19" height="41" viewBox="-1 0 19 41"><g stroke="#8cbbe6" fill="none"><polygon points="11.70,22.35 8.50,24.20 5.30,22.35 5.30,18.65 8.50,16.80 11.70,18.65" stroke-width="1.9"/><line x1="12.80" y1="20.50" x2="17.10" y2="20.50" stroke-width="1.6"/><line x1="14.10" y1="20.50" x2="15.84" y2="18.43" stroke-width="1.35"/><line x1="14.10" y1="20.50" x2="15.84" y2="22.57" stroke-width="1.35"/><line x1="10.65" y1="24.22" x2="12.80" y2="27.95" stroke-width="1.6"/><line x1="11.30" y1="25.35" x2="13.96" y2="25.82" stroke-width="1.35"/><line x1="11.30" y1="25.35" x2="10.38" y2="27.89" stroke-width="1.35"/><line x1="6.35" y1="24.22" x2="4.20" y2="27.95" stroke-width="1.6"/><line x1="5.70" y1="25.35" x2="6.62" y2="27.89" stroke-width="1.35"/><line x1="5.70" y1="25.35" x2="3.04" y2="25.82" stroke-width="1.35"/><line x1="4.20" y1="20.50" x2="-0.10" y2="20.50" stroke-width="1.6"/><line x1="2.90" y1="20.50" x2="1.16" y2="22.57" stroke-width="1.35"/><line x1="2.90" y1="20.50" x2="1.16" y2="18.43" stroke-width="1.35"/><line x1="6.35" y1="16.78" x2="4.20" y2="13.05" stroke-width="1.6"/><line x1="5.70" y1="15.65" x2="3.04" y2="15.18" stroke-width="1.35"/><line x1="5.70" y1="15.65" x2="6.62" y2="13.11" stroke-width="1.35"/><line x1="10.65" y1="16.78" x2="12.80" y2="13.05" stroke-width="1.6"/><line x1="11.30" y1="15.65" x2="10.38" y2="13.11" stroke-width="1.35"/><line x1="11.30" y1="15.65" x2="13.96" y2="15.18" stroke-width="1.35"/></g></svg>
<div class="t " style="left:935px;top:1230px"><span class="file">homebrew.nix</span></div>
<div class="t " style="left:1955px;top:1230px"><span class="size">1.37 KB</span></div>
<svg class="b" style="left:900px;top:1271px" width="19" height="41" viewBox="-1 0 19 41"><g stroke="#8cbbe6" fill="none"><polygon points="11.70,22.35 8.50,24.20 5.30,22.35 5.30,18.65 8.50,16.80 11.70,18.65" stroke-width="1.9"/><line x1="12.80" y1="20.50" x2="17.10" y2="20.50" stroke-width="1.6"/><line x1="14.10" y1="20.50" x2="15.84" y2="18.43" stroke-width="1.35"/><line x1="14.10" y1="20.50" x2="15.84" y2="22.57" stroke-width="1.35"/><line x1="10.65" y1="24.22" x2="12.80" y2="27.95" stroke-width="1.6"/><line x1="11.30" y1="25.35" x2="13.96" y2="25.82" stroke-width="1.35"/><line x1="11.30" y1="25.35" x2="10.38" y2="27.89" stroke-width="1.35"/><line x1="6.35" y1="24.22" x2="4.20" y2="27.95" stroke-width="1.6"/><line x1="5.70" y1="25.35" x2="6.62" y2="27.89" stroke-width="1.35"/><line x1="5.70" y1="25.35" x2="3.04" y2="25.82" stroke-width="1.35"/><line x1="4.20" y1="20.50" x2="-0.10" y2="20.50" stroke-width="1.6"/><line x1="2.90" y1="20.50" x2="1.16" y2="22.57" stroke-width="1.35"/><line x1="2.90" y1="20.50" x2="1.16" y2="18.43" stroke-width="1.35"/><line x1="6.35" y1="16.78" x2="4.20" y2="13.05" stroke-width="1.6"/><line x1="5.70" y1="15.65" x2="3.04" y2="15.18" stroke-width="1.35"/><line x1="5.70" y1="15.65" x2="6.62" y2="13.11" stroke-width="1.35"/><line x1="10.65" y1="16.78" x2="12.80" y2="13.05" stroke-width="1.6"/><line x1="11.30" y1="15.65" x2="10.38" y2="13.11" stroke-width="1.35"/><line x1="11.30" y1="15.65" x2="13.96" y2="15.18" stroke-width="1.35"/></g></svg>
<div class="t " style="left:935px;top:1271px"><span class="file">lazygit.nix</span></div>
<div class="t " style="left:1955px;top:1271px"><span class="size">9.28 KB</span></div>
<svg class="b" style="left:900px;top:1312px" width="19" height="41" viewBox="-1 0 19 41"><g stroke="#8cbbe6" fill="none"><polygon points="11.70,22.35 8.50,24.20 5.30,22.35 5.30,18.65 8.50,16.80 11.70,18.65" stroke-width="1.9"/><line x1="12.80" y1="20.50" x2="17.10" y2="20.50" stroke-width="1.6"/><line x1="14.10" y1="20.50" x2="15.84" y2="18.43" stroke-width="1.35"/><line x1="14.10" y1="20.50" x2="15.84" y2="22.57" stroke-width="1.35"/><line x1="10.65" y1="24.22" x2="12.80" y2="27.95" stroke-width="1.6"/><line x1="11.30" y1="25.35" x2="13.96" y2="25.82" stroke-width="1.35"/><line x1="11.30" y1="25.35" x2="10.38" y2="27.89" stroke-width="1.35"/><line x1="6.35" y1="24.22" x2="4.20" y2="27.95" stroke-width="1.6"/><line x1="5.70" y1="25.35" x2="6.62" y2="27.89" stroke-width="1.35"/><line x1="5.70" y1="25.35" x2="3.04" y2="25.82" stroke-width="1.35"/><line x1="4.20" y1="20.50" x2="-0.10" y2="20.50" stroke-width="1.6"/><line x1="2.90" y1="20.50" x2="1.16" y2="22.57" stroke-width="1.35"/><line x1="2.90" y1="20.50" x2="1.16" y2="18.43" stroke-width="1.35"/><line x1="6.35" y1="16.78" x2="4.20" y2="13.05" stroke-width="1.6"/><line x1="5.70" y1="15.65" x2="3.04" y2="15.18" stroke-width="1.35"/><line x1="5.70" y1="15.65" x2="6.62" y2="13.11" stroke-width="1.35"/><line x1="10.65" y1="16.78" x2="12.80" y2="13.05" stroke-width="1.6"/><line x1="11.30" y1="15.65" x2="10.38" y2="13.11" stroke-width="1.35"/><line x1="11.30" y1="15.65" x2="13.96" y2="15.18" stroke-width="1.35"/></g></svg>
<div class="t " style="left:935px;top:1312px"><span class="file">login-display.nix</span></div>
<div class="t " style="left:1938px;top:1312px"><span class="size">22.24 KB</span></div>
<svg class="b" style="left:900px;top:1353px" width="19" height="41" viewBox="-1 0 19 41"><g stroke="#8cbbe6" fill="none"><polygon points="11.70,22.35 8.50,24.20 5.30,22.35 5.30,18.65 8.50,16.80 11.70,18.65" stroke-width="1.9"/><line x1="12.80" y1="20.50" x2="17.10" y2="20.50" stroke-width="1.6"/><line x1="14.10" y1="20.50" x2="15.84" y2="18.43" stroke-width="1.35"/><line x1="14.10" y1="20.50" x2="15.84" y2="22.57" stroke-width="1.35"/><line x1="10.65" y1="24.22" x2="12.80" y2="27.95" stroke-width="1.6"/><line x1="11.30" y1="25.35" x2="13.96" y2="25.82" stroke-width="1.35"/><line x1="11.30" y1="25.35" x2="10.38" y2="27.89" stroke-width="1.35"/><line x1="6.35" y1="24.22" x2="4.20" y2="27.95" stroke-width="1.6"/><line x1="5.70" y1="25.35" x2="6.62" y2="27.89" stroke-width="1.35"/><line x1="5.70" y1="25.35" x2="3.04" y2="25.82" stroke-width="1.35"/><line x1="4.20" y1="20.50" x2="-0.10" y2="20.50" stroke-width="1.6"/><line x1="2.90" y1="20.50" x2="1.16" y2="22.57" stroke-width="1.35"/><line x1="2.90" y1="20.50" x2="1.16" y2="18.43" stroke-width="1.35"/><line x1="6.35" y1="16.78" x2="4.20" y2="13.05" stroke-width="1.6"/><line x1="5.70" y1="15.65" x2="3.04" y2="15.18" stroke-width="1.35"/><line x1="5.70" y1="15.65" x2="6.62" y2="13.11" stroke-width="1.35"/><line x1="10.65" y1="16.78" x2="12.80" y2="13.05" stroke-width="1.6"/><line x1="11.30" y1="15.65" x2="10.38" y2="13.11" stroke-width="1.35"/><line x1="11.30" y1="15.65" x2="13.96" y2="15.18" stroke-width="1.35"/></g></svg>
<div class="t " style="left:935px;top:1353px"><span class="file">media-process.nix</span></div>
<div class="t " style="left:1955px;top:1353px"><span class="size">4.05 KB</span></div>
<svg class="b" style="left:900px;top:1394px" width="19" height="41" viewBox="-1 0 19 41"><g stroke="#8cbbe6" fill="none"><polygon points="11.70,22.35 8.50,24.20 5.30,22.35 5.30,18.65 8.50,16.80 11.70,18.65" stroke-width="1.9"/><line x1="12.80" y1="20.50" x2="17.10" y2="20.50" stroke-width="1.6"/><line x1="14.10" y1="20.50" x2="15.84" y2="18.43" stroke-width="1.35"/><line x1="14.10" y1="20.50" x2="15.84" y2="22.57" stroke-width="1.35"/><line x1="10.65" y1="24.22" x2="12.80" y2="27.95" stroke-width="1.6"/><line x1="11.30" y1="25.35" x2="13.96" y2="25.82" stroke-width="1.35"/><line x1="11.30" y1="25.35" x2="10.38" y2="27.89" stroke-width="1.35"/><line x1="6.35" y1="24.22" x2="4.20" y2="27.95" stroke-width="1.6"/><line x1="5.70" y1="25.35" x2="6.62" y2="27.89" stroke-width="1.35"/><line x1="5.70" y1="25.35" x2="3.04" y2="25.82" stroke-width="1.35"/><line x1="4.20" y1="20.50" x2="-0.10" y2="20.50" stroke-width="1.6"/><line x1="2.90" y1="20.50" x2="1.16" y2="22.57" stroke-width="1.35"/><line x1="2.90" y1="20.50" x2="1.16" y2="18.43" stroke-width="1.35"/><line x1="6.35" y1="16.78" x2="4.20" y2="13.05" stroke-width="1.6"/><line x1="5.70" y1="15.65" x2="3.04" y2="15.18" stroke-width="1.35"/><line x1="5.70" y1="15.65" x2="6.62" y2="13.11" stroke-width="1.35"/><line x1="10.65" y1="16.78" x2="12.80" y2="13.05" stroke-width="1.6"/><line x1="11.30" y1="15.65" x2="10.38" y2="13.11" stroke-width="1.35"/><line x1="11.30" y1="15.65" x2="13.96" y2="15.18" stroke-width="1.35"/></g></svg>
<div class="t " style="left:935px;top:1394px"><span class="file">media-server.nix</span></div>
<div class="t " style="left:1955px;top:1394px"><span class="size">3.22 KB</span></div>
<svg class="b" style="left:900px;top:1435px" width="19" height="41" viewBox="-1 0 19 41"><g stroke="#8cbbe6" fill="none"><polygon points="11.70,22.35 8.50,24.20 5.30,22.35 5.30,18.65 8.50,16.80 11.70,18.65" stroke-width="1.9"/><line x1="12.80" y1="20.50" x2="17.10" y2="20.50" stroke-width="1.6"/><line x1="14.10" y1="20.50" x2="15.84" y2="18.43" stroke-width="1.35"/><line x1="14.10" y1="20.50" x2="15.84" y2="22.57" stroke-width="1.35"/><line x1="10.65" y1="24.22" x2="12.80" y2="27.95" stroke-width="1.6"/><line x1="11.30" y1="25.35" x2="13.96" y2="25.82" stroke-width="1.35"/><line x1="11.30" y1="25.35" x2="10.38" y2="27.89" stroke-width="1.35"/><line x1="6.35" y1="24.22" x2="4.20" y2="27.95" stroke-width="1.6"/><line x1="5.70" y1="25.35" x2="6.62" y2="27.89" stroke-width="1.35"/><line x1="5.70" y1="25.35" x2="3.04" y2="25.82" stroke-width="1.35"/><line x1="4.20" y1="20.50" x2="-0.10" y2="20.50" stroke-width="1.6"/><line x1="2.90" y1="20.50" x2="1.16" y2="22.57" stroke-width="1.35"/><line x1="2.90" y1="20.50" x2="1.16" y2="18.43" stroke-width="1.35"/><line x1="6.35" y1="16.78" x2="4.20" y2="13.05" stroke-width="1.6"/><line x1="5.70" y1="15.65" x2="3.04" y2="15.18" stroke-width="1.35"/><line x1="5.70" y1="15.65" x2="6.62" y2="13.11" stroke-width="1.35"/><line x1="10.65" y1="16.78" x2="12.80" y2="13.05" stroke-width="1.6"/><line x1="11.30" y1="15.65" x2="10.38" y2="13.11" stroke-width="1.35"/><line x1="11.30" y1="15.65" x2="13.96" y2="15.18" stroke-width="1.35"/></g></svg>
<div class="t " style="left:935px;top:1435px"><span class="file">nvim.nix</span></div>
<div class="t " style="left:1938px;top:1435px"><span class="size">12.67 KB</span></div>
<svg class="b" style="left:1836px;top:533px" width="23" height="41" viewBox="0 0 23 41"><path d="M5.9 13.2 H20.6 L16.2 28.8 H1.6 Z" fill="none" stroke="#ee8739" stroke-width="2.7" stroke-linejoin="round"/></svg>
<div class="t " style="left:17px;top:1558px"><span class="st">home-default.nix</span></div>
<div class="t " style="left:1343px;top:1558px"><span class="st">25:1</span></div>
<div class="t " style="left:1479px;top:1558px"><span class="st">lazygit.nix</span></div>
<div class="t " style="left:2822px;top:1558px"><span class="st">1:1</span></div>
<div class="t " style="left:0px;top:1599px"><span class="fg">:Neotree toggle reveal</span></div>
<div class="t " style="left:2601px;top:1599px"><span class="fg">8,1</span></div>
<div class="t " style="left:2839px;top:1599px"><span class="fg">Top</span></div>
</div>
</div><div id="edge"></div></div></body></html>
